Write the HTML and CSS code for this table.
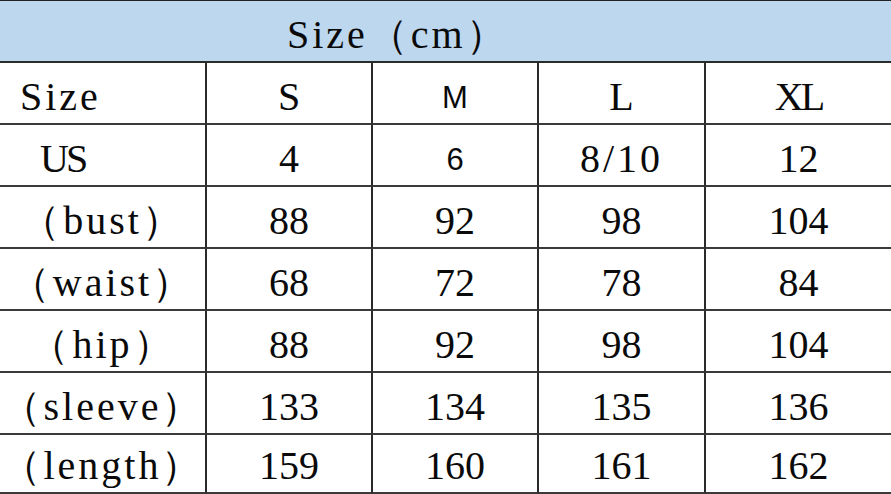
FILE: index.html
```html
<!DOCTYPE html>
<html>
<head>
<meta charset="utf-8">
<link rel="stylesheet" href="styles.css">
</head>
<body>
<div class="sz-grid">
  <div class="sz sz-title">Size（cm）</div>

  <div class="sz sz-lbl sz-start sz-pad1">Size</div>
  <div class="sz">S</div>
  <div class="sz sz-alt">M</div>
  <div class="sz">L</div>
  <div class="sz sz-end sz-tight">XL</div>

  <div class="sz sz-lbl sz-start sz-pad2 sz-tight">US</div>
  <div class="sz">4</div>
  <div class="sz sz-alt">6</div>
  <div class="sz sz-lbl">8/10</div>
  <div class="sz sz-end">12</div>

  <div class="sz sz-lbl">（bust）</div>
  <div class="sz">88</div>
  <div class="sz">92</div>
  <div class="sz">98</div>
  <div class="sz sz-end">104</div>

  <div class="sz sz-lbl">（waist）</div>
  <div class="sz">68</div>
  <div class="sz">72</div>
  <div class="sz">78</div>
  <div class="sz sz-end">84</div>

  <div class="sz sz-lbl">（hip）</div>
  <div class="sz">88</div>
  <div class="sz">92</div>
  <div class="sz">98</div>
  <div class="sz sz-end">104</div>

  <div class="sz sz-lbl">（sleeve）</div>
  <div class="sz">133</div>
  <div class="sz">134</div>
  <div class="sz">135</div>
  <div class="sz sz-end">136</div>

  <div class="sz sz-lbl sz-last">（length）</div>
  <div class="sz sz-last">159</div>
  <div class="sz sz-last">160</div>
  <div class="sz sz-last">161</div>
  <div class="sz sz-end sz-last">162</div>
</div>
</body>
</html>
```

FILE: styles.css
```css
html, body {
  margin: 0;
  padding: 0;
  background: #ffffff;
}

.sz-grid {
  width: 891px;
  height: 494px;
  box-sizing: border-box;
  border-top: 1px solid #222;
  display: grid;
  grid-template-columns: 207px 166px 166px 167px 185px;
  grid-template-rows: 62px repeat(6, 62px) 59px;
  color: #0a0a0a;
}

.sz {
  box-sizing: border-box;
  border-right: 2px solid #2a2a2a;
  border-bottom: 2px solid #3a3a3a;
  font-family: "Liberation Serif", serif;
  font-size: 40px;
  padding-top: 8px;
  line-height: 52px;
  text-align: center;
  white-space: nowrap;
}

.sz-end {
  border-right: none;
}

.sz-title {
  grid-column: 1 / -1;
  background: #bdd7ee;
  border-right: none;
  border-bottom: 2px solid #2a2a2a;
  text-align: left;
  padding-left: 287px;
  padding-top: 9px;
  line-height: 50px;
  letter-spacing: 3px;
}

.sz-lbl {
  letter-spacing: 3px;
}

.sz-start {
  text-align: left;
}

.sz-pad1 {
  padding-left: 20px;
}

.sz-pad2 {
  padding-left: 40px;
}

.sz-tight {
  letter-spacing: -3px;
}

.sz-alt {
  font-family: "Liberation Sans", sans-serif;
  font-size: 31px;
  padding-top: 9px;
}

.sz-last {
  padding-top: 6px;
  line-height: 50px;
}
```
